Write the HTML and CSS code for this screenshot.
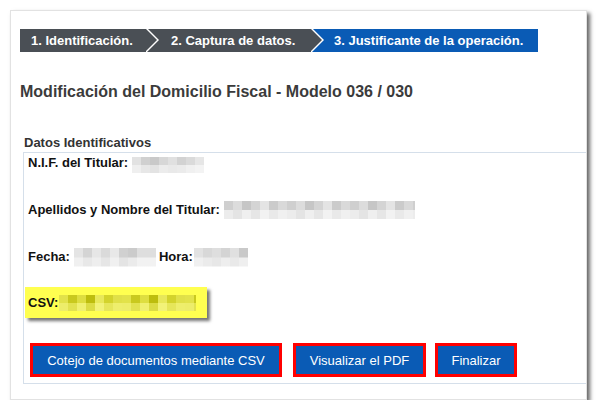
FILE: index.html
```html
<!DOCTYPE html>
<html lang="es">
<head>
    <meta charset="UTF-8">
    <title>Modificación del Domicilio Fiscal - Justificante</title>
    <link rel="stylesheet" href="styles.css">
</head>
<body>
    <div class="panel">
        <!-- pasos del trámite -->
        <div class="steps">
            <div class="step step-1">1. Identificación.</div>
            <div class="step step-2">2. Captura de datos.</div>
            <div class="step step-3">3. Justificante de la operación.</div>
        </div>

        <h1 class="title">Modificación del Domicilio Fiscal - Modelo 036 / 030</h1>

        <div class="legend">Datos Identificativos</div>
        <div class="box">
            <div class="row">N.I.F. del Titular:<span class="blur blur-nif"></span></div>
            <div class="row">Apellidos y Nombre del Titular:<span class="blur blur-name"></span></div>
            <div class="row">Fecha:<span class="blur blur-date"></span>Hora:<span class="blur blur-time"></span></div>

            <div class="csv">CSV:<span class="blur blur-csv"></span></div>

            <div class="actions">
                <button class="btn btn-cotejo">Cotejo de documentos mediante CSV</button>
                <button class="btn btn-pdf">Visualizar el PDF</button>
                <button class="btn btn-fin">Finalizar</button>
            </div>
        </div>
    </div>
</body>
</html>
```

FILE: styles.css
```css
* {
    margin: 0;
    padding: 0;
    box-sizing: border-box;
}

body {
    background: #fff;
    font-family: "Liberation Sans", Arial, sans-serif;
}

.panel {
    width: 577px;
    margin: 10px 0 0 10px;
    padding: 18px 0 15px 9px;
    border: 1px solid #e2e2e2;
    background: #fff;
    box-shadow: 3px 3px 4px rgba(0, 0, 0, 0.6);
}

/* barra de pasos */
.steps {
    display: flex;
    height: 23px;
}

.step {
    position: relative;
    height: 23px;
    line-height: 23px;
    font-size: 13px;
    font-weight: bold;
    color: #fff;
    background: #4a4f55;
    white-space: nowrap;
}

.step-1 {
    width: 126px;
    padding-left: 11px;
}

.step-2 {
    width: 165px;
    padding-left: 25px;
}

.step-3 {
    width: 227px;
    padding-left: 23px;
    background: #0a5bb5;
}

/* flecha blanca + flecha gris encima */
.step-1::before,
.step-2::before {
    content: "";
    position: absolute;
    top: -2px;
    right: -13px;
    border-left: 13px solid #fff;
    border-top: 13.5px solid transparent;
    border-bottom: 13.5px solid transparent;
    z-index: 1;
}

.step-1::after,
.step-2::after {
    content: "";
    position: absolute;
    top: 0;
    right: -11px;
    border-left: 11px solid #4a4f55;
    border-top: 11.5px solid transparent;
    border-bottom: 11.5px solid transparent;
    z-index: 2;
}

.title {
    margin-top: 31px;
    font-size: 16px;
    line-height: 18px;
    color: #3b3b3b;
}

.legend {
    margin: 34px 0 0 4px;
    font-size: 13px;
    line-height: 15px;
    font-weight: bold;
    color: #333;
}

.box {
    margin: 2px 0 0 3px;
    padding: 2px 0 6px 1px;
    border: 1px solid #d5dfea;
    border-right: 0;
}

.row {
    display: flex;
    align-items: center;
    height: 16px;
    margin: 0 0 31px 3px;
    font-size: 13px;
    line-height: 16px;
    font-weight: bold;
    color: #111;
    white-space: nowrap;
}

/* datos pixelados */
.blur {
    display: inline-block;
    flex: none;
}

.blur-nif {
    width: 72px;
    height: 16px;
    margin: 4px 0 0 4px;
    background:
        linear-gradient(90deg, #e2e2e2 0 9px, #d0d0d0 9px 18px, #c9c9c9 18px 27px, #d7d7d7 27px 36px, #e0e0e0 36px 45px, #d2d2d2 45px 54px, #dadada 54px 63px, #e6e6e6 63px) top / 100% 50% no-repeat,
        linear-gradient(90deg, #efefef 0 9px, #e7e7e7 9px 18px, #e3e3e3 18px 27px, #ececec 27px 36px, #e9e9e9 36px 45px, #ebebeb 45px 54px, #f0f0f0 54px 63px, #f3f3f3 63px) bottom / 100% 50% no-repeat;
}

.blur-name {
    width: 191px;
    height: 18px;
    margin-left: 4px;
    background:
        repeating-linear-gradient(90deg, #cfcfcf 0 9px, #dcdcdc 9px 18px, #c6c6c6 18px 27px, #d4d4d4 27px 36px, #e4e4e4 36px 45px, #cbcbcb 45px 54px, #d9d9d9 54px 63px) top / 100% 50% no-repeat,
        repeating-linear-gradient(90deg, #ececec 0 9px, #e4e4e4 9px 18px, #efefef 18px 27px, #e6e6e6 27px 36px, #f2f2f2 36px 45px, #e9e9e9 45px 54px, #f0f0f0 54px 63px) bottom / 100% 50% no-repeat;
}

.blur-date {
    width: 82px;
    height: 19px;
    margin: 0 3px 0 4px;
    background:
        linear-gradient(90deg, #e4e4e4 0 9px, #d4d4d4 9px 18px, #e6e6e6 18px 27px, #dadada 27px 36px, #e8e8e8 36px 45px, #d0d0d0 45px 54px, #cbcbcb 54px 63px, #dedede 63px) top / 100% 50% no-repeat,
        linear-gradient(90deg, #f0f0f0 0 9px, #e8e8e8 9px 18px, #eeeeee 18px 27px, #e6e6e6 27px 36px, #f0f0f0 36px 45px, #e4e4e4 45px 54px, #ebebeb 54px 63px, #f2f2f2 63px) bottom / 100% 50% no-repeat;
}

.blur-time {
    width: 54px;
    height: 19px;
    margin-left: 1px;
    background:
        linear-gradient(90deg, #e2e2e2 0 9px, #d8d8d8 9px 18px, #dedede 18px 27px, #d4d4d4 27px 36px, #e0e0e0 36px 45px, #c9c9c9 45px) top / 100% 50% no-repeat,
        linear-gradient(90deg, #f0f0f0 0 9px, #ebebeb 9px 18px, #e7e7e7 18px 27px, #eeeeee 27px 36px, #e9e9e9 36px 45px, #efefef 45px) bottom / 100% 50% no-repeat;
}

/* recuadro amarillo del CSV */
.csv {
    display: flex;
    align-items: center;
    width: 182px;
    height: 31px;
    margin-top: -9px;
    padding-left: 3px;
    background: #ffff50;
    box-shadow: 3px 3px 3px rgba(0, 0, 0, 0.55);
    font-size: 13px;
    font-weight: bold;
    color: #111;
}

.blur-csv {
    width: 137px;
    height: 16px;
    margin-left: 1px;
    background:
        repeating-linear-gradient(90deg, #e2e24a 0 9px, #c9c91e 9px 18px, #dede40 18px 27px, #bdbd0e 27px 36px, #e8e85a 36px 45px, #d3d32c 45px 54px, #e0e048 54px 63px) top / 100% 50% no-repeat,
        repeating-linear-gradient(90deg, #eded6a 0 9px, #e2e250 9px 18px, #f0f070 18px 27px, #dcdc44 27px 36px, #f2f278 36px 45px, #e6e65a 45px 54px, #eeee6c 54px 63px) bottom / 100% 50% no-repeat;
}

/* botones */
.actions {
    display: flex;
    margin: 25px 0 0 5px;
}

.btn {
    height: 34px;
    border: 3px solid #f00;
    background: #0a5bb5;
    color: #fff;
    font-family: "Liberation Sans", Arial, sans-serif;
    font-size: 13px;
    cursor: pointer;
}

.btn-cotejo {
    width: 252px;
}

.btn-pdf {
    width: 133px;
    margin-left: 11px;
}

.btn-fin {
    width: 82px;
    margin-left: 9px;
}
```
